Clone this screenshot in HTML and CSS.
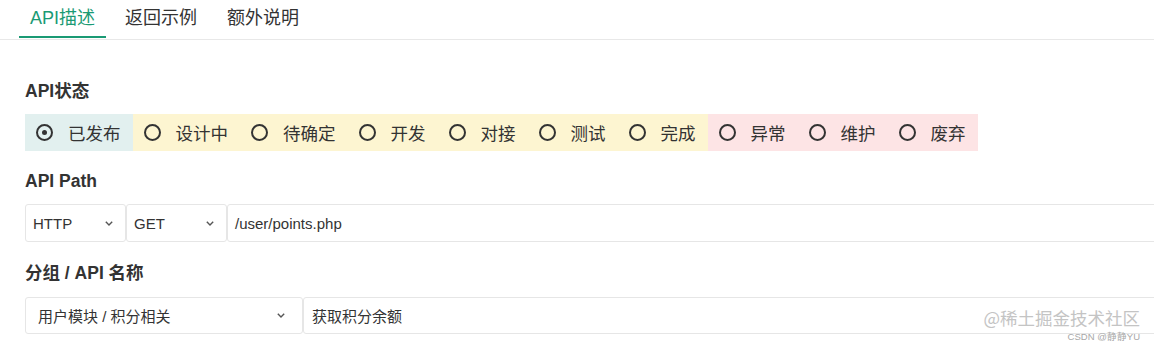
FILE: index.html
```html
<!DOCTYPE html>
<html lang="zh-CN">
<head>
<meta charset="utf-8">
<title>API</title>
<link rel="stylesheet" href="styles.css">
</head>
<body>
<div class="page">
  <div class="tabs">
    <div class="tab active">API描述</div>
    <div class="tab">返回示例</div>
    <div class="tab">额外说明</div>
  </div>
  <div class="content">
    <div class="section">
      <div class="label">API状态</div>
      <div class="status">
        <div class="grp teal">
          <div class="item"><span class="radio checked"></span><span>已发布</span></div>
        </div>
        <div class="grp yellow">
          <div class="item"><span class="radio"></span><span>设计中</span></div>
          <div class="item"><span class="radio"></span><span>待确定</span></div>
          <div class="item"><span class="radio"></span><span>开发</span></div>
          <div class="item"><span class="radio"></span><span>对接</span></div>
          <div class="item"><span class="radio"></span><span>测试</span></div>
          <div class="item"><span class="radio"></span><span>完成</span></div>
        </div>
        <div class="grp pink">
          <div class="item"><span class="radio"></span><span>异常</span></div>
          <div class="item"><span class="radio"></span><span>维护</span></div>
          <div class="item"><span class="radio"></span><span>废弃</span></div>
        </div>
      </div>
    </div>
    <div class="section">
      <div class="label">API Path</div>
      <div class="fields">
        <div class="field select w-proto"><span>HTTP</span><svg class="chev" width="8" height="5" viewBox="0 0 8 5"><polyline points="0.8,0.8 4,4 7.2,0.8" fill="none" stroke="#555" stroke-width="1.4"/></svg></div>
        <div class="field select w-method"><span>GET</span><svg class="chev" width="8" height="5" viewBox="0 0 8 5"><polyline points="0.8,0.8 4,4 7.2,0.8" fill="none" stroke="#555" stroke-width="1.4"/></svg></div>
        <div class="field grow"><span>/user/points.php</span></div>
      </div>
    </div>
    <div class="section last">
      <div class="label">分组 / API 名称</div>
      <div class="fields">
        <div class="field select w-group"><span>用户模块 / 积分相关</span><svg class="chev" width="8" height="5" viewBox="0 0 8 5"><polyline points="0.8,0.8 4,4 7.2,0.8" fill="none" stroke="#555" stroke-width="1.4"/></svg></div>
        <div class="field grow name"><span>获取积分余额</span></div>
      </div>
    </div>
  </div>
  <div class="watermark"><span class="wm-main">@稀土掘金技术社区</span><span class="csdn">CSDN @静静YU</span></div>
</div>
</body>
</html>
```
FILE: styles.css
```css
html, body {
  margin: 0;
  padding: 0;
  background: #fff;
}
body {
  font-family: "Liberation Sans", "Noto Sans CJK SC", sans-serif;
  color: #333;
  overflow: hidden;
}
.page {
  position: relative;
  width: 1154px;
  height: 345px;
  overflow: hidden;
}
.tabs {
  display: flex;
  gap: 8px;
  padding-left: 19px;
  padding-bottom: 1px;
  border-bottom: 1px solid #e8e8e8;
}
.tab {
  padding: 1px 11px 0;
  line-height: 35px;
  font-size: 18px;
  color: #333;
  border-bottom: 2px solid transparent;
}
.tab.active {
  color: #1a9a74;
  border-bottom-color: #1a9a74;
}
.content {
  padding: 39px 0 0 25px;
}
.section + .section {
  margin-top: 18px;
}
.section.last {
  margin-top: 19px;
}
.label {
  font-size: 17.5px;
  font-weight: bold;
  line-height: 24px;
  margin-bottom: 11px;
  color: #333;
}
.section.last .label {
  margin-bottom: 12px;
}
.status {
  display: flex;
  height: 37px;
}
.grp {
  display: flex;
}
.teal { background: #e2f0ef; }
.yellow { background: #fdf5d1; }
.pink { background: #fde4e5; }
.item {
  display: flex;
  align-items: center;
  padding: 0 12px 0 11px;
  font-size: 17.5px;
  color: #333;
}
.radio {
  box-sizing: border-box;
  width: 17px;
  height: 17px;
  border: 2.6px solid #333;
  border-radius: 50%;
  margin-right: 15px;
  display: flex;
  align-items: center;
  justify-content: center;
}
.radio.checked::after {
  content: "";
  width: 5px;
  height: 5px;
  border-radius: 50%;
  background: #333;
}
.fields {
  display: flex;
  width: 1200px;
}
.field {
  box-sizing: border-box;
  height: 38px;
  border: 1px solid #e6e6e6;
  border-radius: 3px;
  display: flex;
  align-items: center;
  font-size: 15px;
  color: #333;
  padding-left: 7px;
  background: #fff;
}
.section.last .field {
  height: 37px;
}
.select {
  justify-content: space-between;
  padding-right: 12px;
}
.w-proto { width: 101px; }
.w-method { width: 101px; }
.w-group { width: 278px; padding-left: 12px; padding-right: 17px; }
.grow { flex: 1; }
.name { padding-left: 8px; }
.chev { display: block; }
.watermark {
  position: absolute;
  right: 14px;
  bottom: 3px;
  display: flex;
  flex-direction: column;
  align-items: flex-end;
}
.wm-main {
  font-family: "Noto Sans CJK SC", sans-serif;
  font-size: 17.5px;
  color: #c4c4c4;
  line-height: 26px;
}
.csdn {
  font-family: "Liberation Sans", sans-serif;
  font-size: 9.5px;
  line-height: 11px;
  color: #a8a8a8;
  white-space: nowrap;
}
```
